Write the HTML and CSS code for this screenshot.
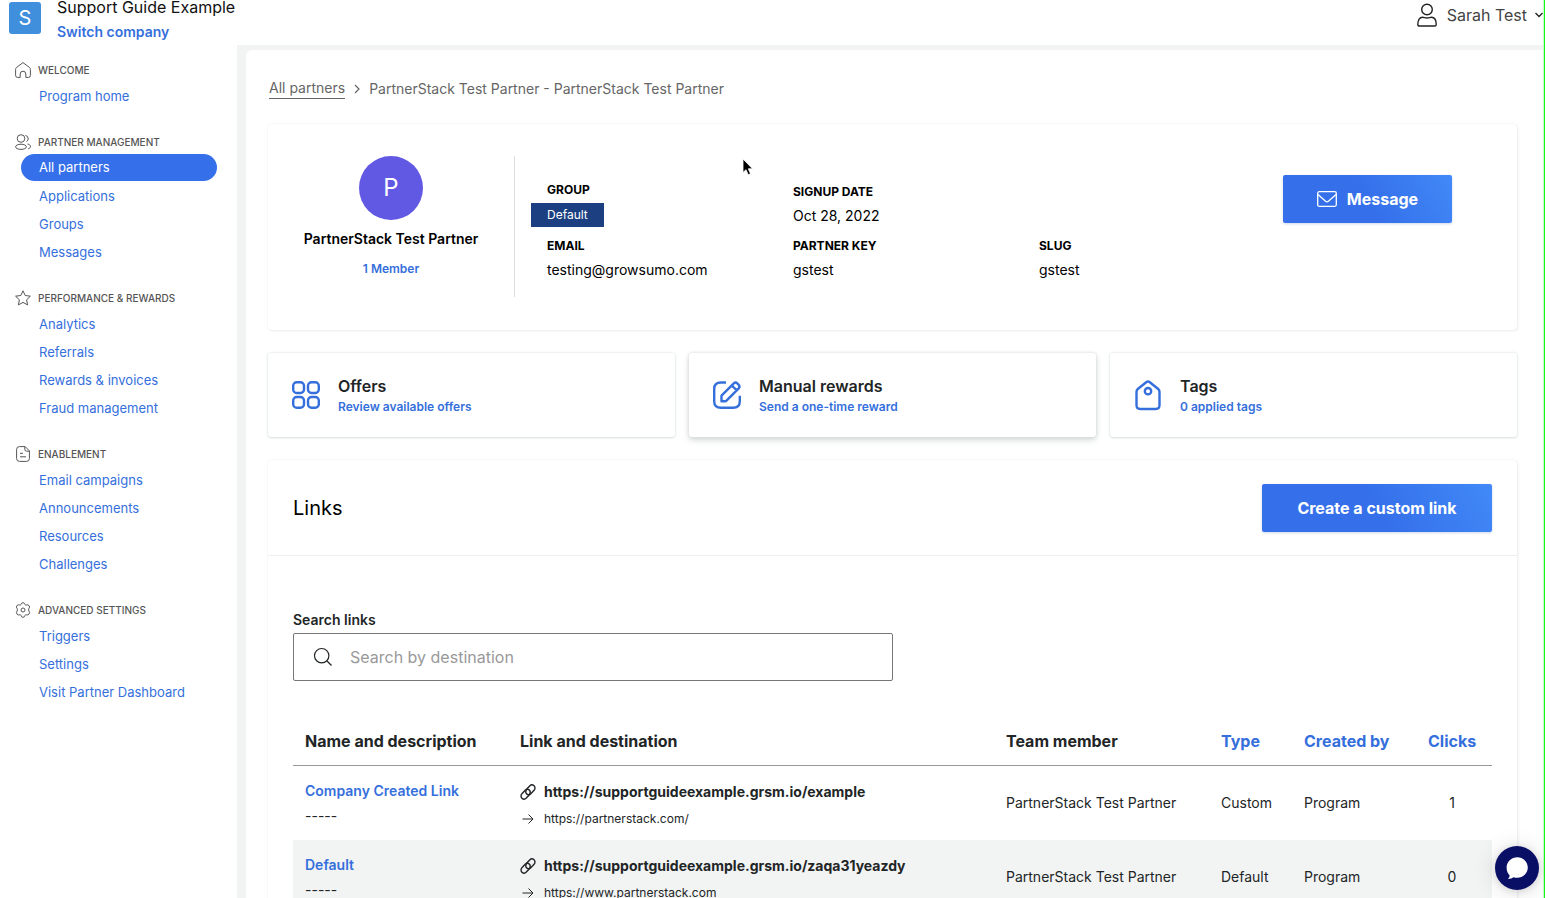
FILE: index.html
```html
<!DOCTYPE html>
<html lang="en">
<head>
<meta charset="utf-8">
<meta name="viewport" content="width=device-width, initial-scale=1">
<title>PartnerStack Test Partner</title>
<link rel="stylesheet" href="styles.css">
</head>
<body>
<svg class="sprite" aria-hidden="true">
  <symbol id="i-link" viewBox="0 0 16 16"><g fill="none" stroke="currentColor" stroke-width="1.400" stroke-linecap="round"><path d="M7 4.800 9.700 1.900a2.900 2.900 0 0 1 4.400 4.300L10.800 9.800a2.900 2.900 0 0 1-4.300 0 2.700 2.700 0 0 1-.3-3.200"/><path d="M9 11.200 6.300 14.100a2.900 2.900 0 0 1-4.400-4.300L5.200 6.200a2.900 2.900 0 0 1 4.300 0 2.700 2.700 0 0 1 .3 3.200"/></g></symbol>
  <symbol id="i-arrow" viewBox="0 0 16 16"><path d="M2.500 8h10.500M8.500 3.500 13 8 8.500 12.500" fill="none" stroke="currentColor"/></symbol>
</svg>
<div class="app">
  <header class="topbar">
    <div class="brand">
      <span class="brand-logo">S</span>
      <div class="brand-text">
        <div class="brand-name">Support Guide Example</div>
        <a class="brand-switch" href="#">Switch company</a>
      </div>
    </div>
    <button class="user" type="button">
      <svg class="user-icon" viewBox="0 0 20 24" fill="none" stroke="currentColor" stroke-width="1.4"><circle cx="10" cy="6.500" r="5.300"/><path d="M.8 21.500c0-4.500 2-7.300 4.700-7.300 1.500 0 2.500.8 4.500.8s3-.8 4.500-.8c2.700 0 4.700 2.800 4.700 7.300 0 1-.6 1.500-1.500 1.500H2.300c-.9 0-1.500-.5-1.500-1.500z"/></svg>
      <span>Sarah Test</span>
      <svg class="user-caret" viewBox="0 0 8 6" fill="none" stroke="currentColor" stroke-width="1.300"><path d="M.5 1 4 4.500 7.500 1"/></svg>
    </button>
  </header>

  <nav class="sidebar">
    <section class="group">
      <h2 class="group-title"><svg viewBox="0 0 16 16"><path d="M8 .6 1.500 5.500Q.6 6.200.6 7.500v6q0 1.900 1.900 1.900h2.700V12a2.800 2.800 0 0 1 5.600 0v3.400h2.700q1.900 0 1.900-1.900v-6q0-1.300-.9-2z"/></svg>WELCOME</h2>
      <a href="#">Program home</a>
    </section>
    <section class="group">
      <h2 class="group-title"><svg viewBox="0 0 16 16"><circle cx="6" cy="4.500" r="3.800"/><ellipse cx="6" cy="12.800" rx="5.400" ry="2.600"/><path d="M10.500 1.500a3.200 3.200 0 0 1 1 6M12.500 10c2 .4 3 1.300 3 2.500s-1 2-2.300 2.300"/></svg>PARTNER MANAGEMENT</h2>
      <a class="active" href="#">All partners</a>
      <a href="#">Applications</a>
      <a href="#">Groups</a>
      <a href="#">Messages</a>
    </section>
    <section class="group">
      <h2 class="group-title"><svg viewBox="0 0 16 16"><path d="m8 .8 2.200 4.700 5.200.7-3.800 3.600 1 5.100L8 12.400l-4.600 2.500 1-5.100L.6 6.200l5.200-.7z"/></svg>PERFORMANCE &amp; REWARDS</h2>
      <a href="#">Analytics</a>
      <a href="#">Referrals</a>
      <a href="#">Rewards &amp; invoices</a>
      <a href="#">Fraud management</a>
    </section>
    <section class="group">
      <h2 class="group-title"><svg viewBox="0 0 16 16"><path d="M4.500.6h5.700l4.200 4.200v7.700q0 2.900-2.900 2.900h-7q-2.900 0-2.900-2.900v-9Q1.600.6 4.500.6zM9.800.8v2.500q0 1.900 1.900 1.900h2.500M5 7.300h3M5 10.800h6"/></svg>ENABLEMENT</h2>
      <a href="#">Email campaigns</a>
      <a href="#">Announcements</a>
      <a href="#">Resources</a>
      <a href="#">Challenges</a>
    </section>
    <section class="group">
      <h2 class="group-title"><svg viewBox="0 0 16 16"><path d="M6.600 1.300q1.400-1.400 2.800 0l.5 1.200q.5.700 1.300.5l1.500-.2q1.700.4 1.900 2.300l-.8 1.600q-.4 1.300 0 2.200l.8 1.600q-.2 1.900-1.900 2.500l-1.500-.2q-.8-.1-1.300.6l-.5 1.300q-1.400 1.400-2.800 0l-.5-1.300q-.5-.7-1.300-.6l-1.500.2q-1.700-.6-1.900-2.500l.8-1.600q.4-.9 0-2.200l-.8-1.600q.2-1.900 1.900-2.300l1.500.2q.8.200 1.300-.5z"/><circle cx="8" cy="8" r="2"/></svg>ADVANCED SETTINGS</h2>
      <a href="#">Triggers</a>
      <a href="#">Settings</a>
      <a href="#">Visit Partner Dashboard</a>
    </section>
  </nav>

  <main class="main">
    <div class="page">
      <nav class="crumbs" aria-label="Breadcrumb">
        <a href="#">All partners</a>
        <svg viewBox="0 0 8 10" fill="none" stroke="currentColor" stroke-width="1.200"><path d="m2 1 4 4-4 4"/></svg>
        <span>PartnerStack Test Partner - PartnerStack Test Partner</span>
      </nav>

      <section class="card partner">
        <div class="profile">
          <div class="avatar">P</div>
          <div class="profile-name">PartnerStack Test Partner</div>
          <a class="profile-members" href="#">1 Member</a>
        </div>
        <dl class="facts">
          <div><dt>GROUP</dt><dd class="tag">Default</dd></div>
          <div><dt>SIGNUP DATE</dt><dd>Oct 28, 2022</dd></div>
          <div class="fact-row"><dt>EMAIL</dt><dd>testing@growsumo.com</dd></div>
          <div><dt>PARTNER KEY</dt><dd>gstest</dd></div>
          <div><dt>SLUG</dt><dd>gstest</dd></div>
        </dl>
        <div class="partner-action">
          <button class="btn btn-message" type="button"><svg viewBox="0 0 20 16" fill="none" stroke="currentColor" stroke-width="1.300"><rect x=".7" y=".7" width="18.600" height="14.600" rx="1.500"/><path d="m1 3.500 7.300 6.600q1.700 1.500 3.400 0L19 3.500"/></svg>Message</button>
        </div>
      </section>

      <div class="tiles">
        <a class="tile" href="#">
          <svg viewBox="0 0 28 28"><rect x="1.200" y="1.200" width="10.800" height="10.800" rx="3.500"/><rect x="16" y="1.200" width="10.800" height="10.800" rx="3.500"/><rect x="1.200" y="16" width="10.800" height="10.800" rx="3.500"/><rect x="16" y="16" width="10.800" height="10.800" rx="3.500"/></svg>
          <span class="tile-text"><span class="tile-title">Offers</span><span class="tile-sub">Review available offers</span></span>
        </a>
        <a class="tile raised" href="#">
          <svg viewBox="0 0 28 28"><path d="M13 1.500H8Q1.200 1.500 1.200 8v12.300q0 6.500 6.800 6.500h12q6.800 0 6.800-6.500v-5.500"/><path d="M8.500 20.200v-5.600L20.800 2.300q1.700-1.500 3.600.2l1.300 1.300q1.500 1.900 0 3.600L13.500 19.600q-.6.600-1.600.6zM18.800 4.500l4.700 4.700"/></svg>
          <span class="tile-text"><span class="tile-title">Manual rewards</span><span class="tile-sub">Send a one-time reward</span></span>
        </a>
        <a class="tile" href="#">
          <svg viewBox="0 0 28 28"><path d="M12.500 1Q14-.2 15.500 1l8.400 6.800q1.600 1.300 1.600 3v13.500q0 3.700-3.700 3.700H6.200q-3.700 0-3.700-3.700V10.800q0-1.700 1.600-3z"/><circle cx="14" cy="10.200" r="3.200"/></svg>
          <span class="tile-text"><span class="tile-title">Tags</span><span class="tile-sub">0 applied tags</span></span>
        </a>
      </div>

      <section class="card links">
        <div class="links-head">
          <h1>Links</h1>
          <button class="btn btn-create" type="button">Create a custom link</button>
        </div>
        <div class="links-body">
          <label class="search-label" for="search">Search links</label>
          <div class="search">
            <svg viewBox="0 0 20 20" fill="none" stroke="currentColor" stroke-width="1.200"><circle cx="8.700" cy="8.700" r="7.200"/><path d="m14 14 4.500 4.500"/></svg>
            <input id="search" type="text" placeholder="Search by destination">
          </div>
          <table>
            <colgroup><col class="c-name"><col><col class="c-member"><col class="c-type"><col class="c-by"><col class="c-clicks"></colgroup>
            <thead>
              <tr>
                <th scope="col">Name and description</th>
                <th scope="col">Link and destination</th>
                <th scope="col">Team member</th>
                <th scope="col"><button type="button">Type</button></th>
                <th scope="col"><button type="button">Created by</button></th>
                <th scope="col" class="num"><button type="button">Clicks</button></th>
              </tr>
            </thead>
            <tbody>
              <tr>
                <td><a class="name" href="#">Company Created Link</a><div class="desc">-----</div></td>
                <td>
                  <div class="url"><svg><use href="#i-link"/></svg>https://supportguideexample.grsm.io/example</div>
                  <div class="dest"><svg><use href="#i-arrow"/></svg>https://partnerstack.com/</div>
                </td>
                <td>PartnerStack Test Partner</td>
                <td>Custom</td>
                <td>Program</td>
                <td class="num">1</td>
              </tr>
              <tr>
                <td><a class="name" href="#">Default</a><div class="desc">-----</div></td>
                <td>
                  <div class="url"><svg><use href="#i-link"/></svg>https://supportguideexample.grsm.io/zaqa31yeazdy</div>
                  <div class="dest"><svg><use href="#i-arrow"/></svg>https://www.partnerstack.com</div>
                </td>
                <td>PartnerStack Test Partner</td>
                <td>Default</td>
                <td>Program</td>
                <td class="num">0</td>
              </tr>
            </tbody>
          </table>
        </div>
      </section>
    </div>
  </main>
</div>

<button class="chat" type="button" aria-label="Open chat"><svg viewBox="0 0 24 24"><path fill="#fff" d="M12.300 1.200C18 1.200 22.800 5.700 22.800 11.500S18 21.800 12.300 21.800q-2 0-3.700-.6-2 1.800-5.600 1.800 1.800-1.500 1.600-3.800Q1.600 16.300 1.600 11.500C1.600 5.700 6.500 1.200 12.300 1.200z"/></svg></button>
<svg class="pointer" viewBox="0 0 12 18" aria-hidden="true"><path d="M1 1v13.500l3-2.800 2.200 5 2.300-1-2.200-4.900h4.200z" fill="#000" stroke="#fff" stroke-width=".8"/></svg>
</body>
</html>
```
FILE: styles.css
```css
:root {
  --blue: #356fdc;
  --fill: #3570ea;
  --frame: #f2f4f4;
  --ink: #222526;
}

* { box-sizing: border-box; }

body {
  margin: 0;
  font-family: Inter, "Liberation Sans", sans-serif;
  font-size: 14px;
  line-height: 20px;
  color: var(--ink);
}

a { color: var(--blue); text-decoration: none; }
button { font: inherit; border: 0; background: none; padding: 0; cursor: pointer; }
h1, h2, dl, dd { margin: 0; }
svg { flex: none; }
.sprite { display: none; }

.app {
  display: grid;
  grid-template: 45px 1fr / 237px 1fr;
  height: 100vh;
  padding-right: 1px;
  border-right: 1px solid #14fa14;
  background: #c8fac8;
}

/* Top bar */
.topbar {
  grid-column: 1 / -1;
  display: flex;
  justify-content: space-between;
  align-items: flex-start;
  background: #fff;
}
.brand { display: flex; gap: 16px; padding-left: 9px; }
.brand-logo {
  width: 32px;
  height: 32px;
  margin-top: 2px;
  border-radius: 3px;
  background: #3f8fdc;
  color: #fff;
  font-size: 20px;
  line-height: 32px;
  text-align: center;
}
.brand-name { font-size: 16px; line-height: 14px; color: #111; }
.brand-switch { display: block; margin-top: 6px; font-weight: 600; line-height: 24px; }
.user {
  display: flex;
  align-items: center;
  gap: 10px;
  margin-top: 3px;
  font-size: 16px;
  line-height: 24px;
  color: #444;
}
.user svg { color: #222; }
.user-icon { width: 20px; height: 24px; }
.user-caret { width: 8px; height: 6px; margin-left: -2px; }

/* Sidebar */
.sidebar {
  display: flex;
  flex-direction: column;
  gap: 21px;
  padding: 13px 20px 0 15px;
  background: #fff;
  overflow: hidden;
}
.group { display: flex; flex-direction: column; gap: 1px; }
.group-title {
  display: flex;
  align-items: center;
  gap: 7px;
  height: 23px;
  font-size: 10px;
  font-weight: 500;
  line-height: 24px;
  color: #555;
}
.group-title svg { width: 16px; height: 16px; fill: none; stroke: #555; }
.group a {
  height: 27px;
  margin-left: 6px;
  padding-left: 18px;
  border-radius: 14px;
  font-size: 13px;
  line-height: 29px;
}
.group .active { background: var(--fill); color: #fff; line-height: 27px; }

/* Page frame */
.main {
  display: flex;
  overflow: hidden;
  padding: 5px 0 0 9px;
  background: var(--frame);
}
.page {
  flex: 1;
  min-width: 0;
  padding: 28px 26px 0 22px;
  border-top-left-radius: 6px;
  background: #fff;
  overflow-y: auto;
  scrollbar-width: none;
}
.crumbs { display: flex; align-items: center; gap: 8px; margin-left: 1px; color: #666; }
.crumbs a { color: #666; border-bottom: 1px solid #666; }
.crumbs svg { width: 8px; height: 10px; }

.card {
  border-radius: 4px;
  box-shadow: 0 0 2px #e8eded, 1px 1px 3px #eceeee;
}

/* Partner summary */
.partner {
  display: flex;
  margin-top: 25px;
  padding: 32px 0 33px;
  color: #000;
}
.profile {
  display: flex;
  flex-direction: column;
  align-items: center;
  width: 247px;
  height: 141px;
  border-right: 1px solid #ddd;
}
.avatar {
  width: 64px;
  height: 64px;
  border-radius: 50%;
  background: #6159e3;
  color: #fff;
  font-size: 24px;
  line-height: 64px;
  text-align: center;
}
.profile-name { margin-top: 9px; font-weight: 600; }
.profile-members { margin-top: 10px; font-size: 12px; font-weight: 600; }
.facts {
  flex: 1;
  display: grid;
  grid-template-columns: 246fr 246fr 244fr;
  align-items: end;
  align-content: start;
  row-gap: 6px;
  padding: 24px 0 0 32px;
}
.fact-row { grid-column-start: 1; }
.facts dt { font-size: 12px; font-weight: 700; }
.facts dd { line-height: 28px; }
.facts .tag {
  width: max-content;
  margin: 3px 0 3px -16px;
  padding: 0 16px;
  background: #1b3f80;
  color: #fff;
  font-size: 12px;
  line-height: 24px;
}
.partner-action { width: 234px; padding-top: 19px; }

.btn {
  display: inline-flex;
  align-items: center;
  justify-content: center;
  gap: 10px;
  height: 48px;
  padding: 0 32px;
  border-radius: 2px;
  background: linear-gradient(60deg, #3570ea 50%, #4189f8);
  box-shadow: 0 1px 3px #cfd8e6;
  color: #fff;
  font-size: 16px;
  font-weight: 700;
}
.btn svg { width: 20px; height: 16px; }
.btn-message { min-width: 169px; }
.btn-create { min-width: 230px; }

/* Shortcut tiles */
.tiles {
  display: grid;
  grid-template-columns: repeat(3, 1fr);
  gap: 14px;
  margin-top: 23px;
}
.tile {
  display: flex;
  align-items: center;
  gap: 18px;
  height: 84px;
  padding: 0 24px;
  border-radius: 3px;
  box-shadow: 0 0 3px #d8dede, 0 1px 2px #e2e6e6;
}
.raised { box-shadow: 0 0 3px #d4dada, 0 3px 6px #d4d8d8; }
.tile svg {
  width: 28px;
  height: 28px;
  fill: none;
  stroke: var(--blue);
  stroke-width: 2.400px;
  stroke-linejoin: round;
  overflow: visible;
}
.tile-text { display: flex; flex-direction: column; padding-top: 2px; }
.tile-title { font-size: 16px; font-weight: 600; line-height: 22px; color: var(--ink); }
.tile-sub { font-size: 12px; font-weight: 600; }

/* Links */
.links { margin-top: 23px; }
.links-head {
  display: flex;
  align-items: center;
  justify-content: space-between;
  height: 96px;
  padding: 0 25px;
  border-bottom: 1px solid #eef0f0;
}
.links-head h1 { font-size: 20px; font-weight: 400; color: #000; }
.links-body { padding: 54px 25px 24px; }
.search-label { display: block; margin-bottom: 3px; font-weight: 600; }
.search {
  display: flex;
  align-items: center;
  gap: 17px;
  max-width: 600px;
  height: 48px;
  padding: 0 19px;
  border: 1px solid #777;
  border-radius: 2px;
}
.search svg { width: 20px; height: 20px; }
.search input {
  flex: 1;
  min-width: 0;
  padding: 0;
  border: 0;
  outline: 0;
  background: none;
  font: inherit;
  font-size: 16px;
}
.search input::placeholder { color: #999; }

table { width: 100%; margin-top: 36px; border-collapse: separate; border-spacing: 0; table-layout: fixed; }
.c-name, .c-member { width: 215px; }
.c-type { width: 83px; }
.c-by { width: 124px; }
.c-clicks { width: 76px; }
th {
  height: 49px;
  padding: 0 12px;
  border-bottom: 1px solid #999;
  font-size: 16px;
  font-weight: 700;
  text-align: left;
  white-space: nowrap;
}
th button { color: var(--blue); }
td { height: 74px; padding: 0 12px; }
th.num, td.num { padding-right: 16px; text-align: center; }
tbody tr:nth-child(even) { background: var(--frame); }
.name { font-weight: 600; }
.desc { margin-top: 5px; }
.url, .dest { display: flex; align-items: center; gap: 8px; }
.url { padding-top: 5px; font-weight: 700; }
.dest { margin-top: 7px; font-size: 12px; }
.url svg, .dest svg { width: 16px; height: 16px; }

.chat {
  position: fixed;
  right: 6px;
  bottom: 8px;
  display: grid;
  place-items: center;
  width: 44px;
  height: 44px;
  border-radius: 50%;
  background: #0a0f66;
  box-shadow: 0 1px 8px #0002, 0 2px 24px #0002;
}
.chat svg { width: 24px; height: 24px; }
.pointer { position: absolute; left: 742px; top: 158px; width: 12px; height: 18px; }
```
